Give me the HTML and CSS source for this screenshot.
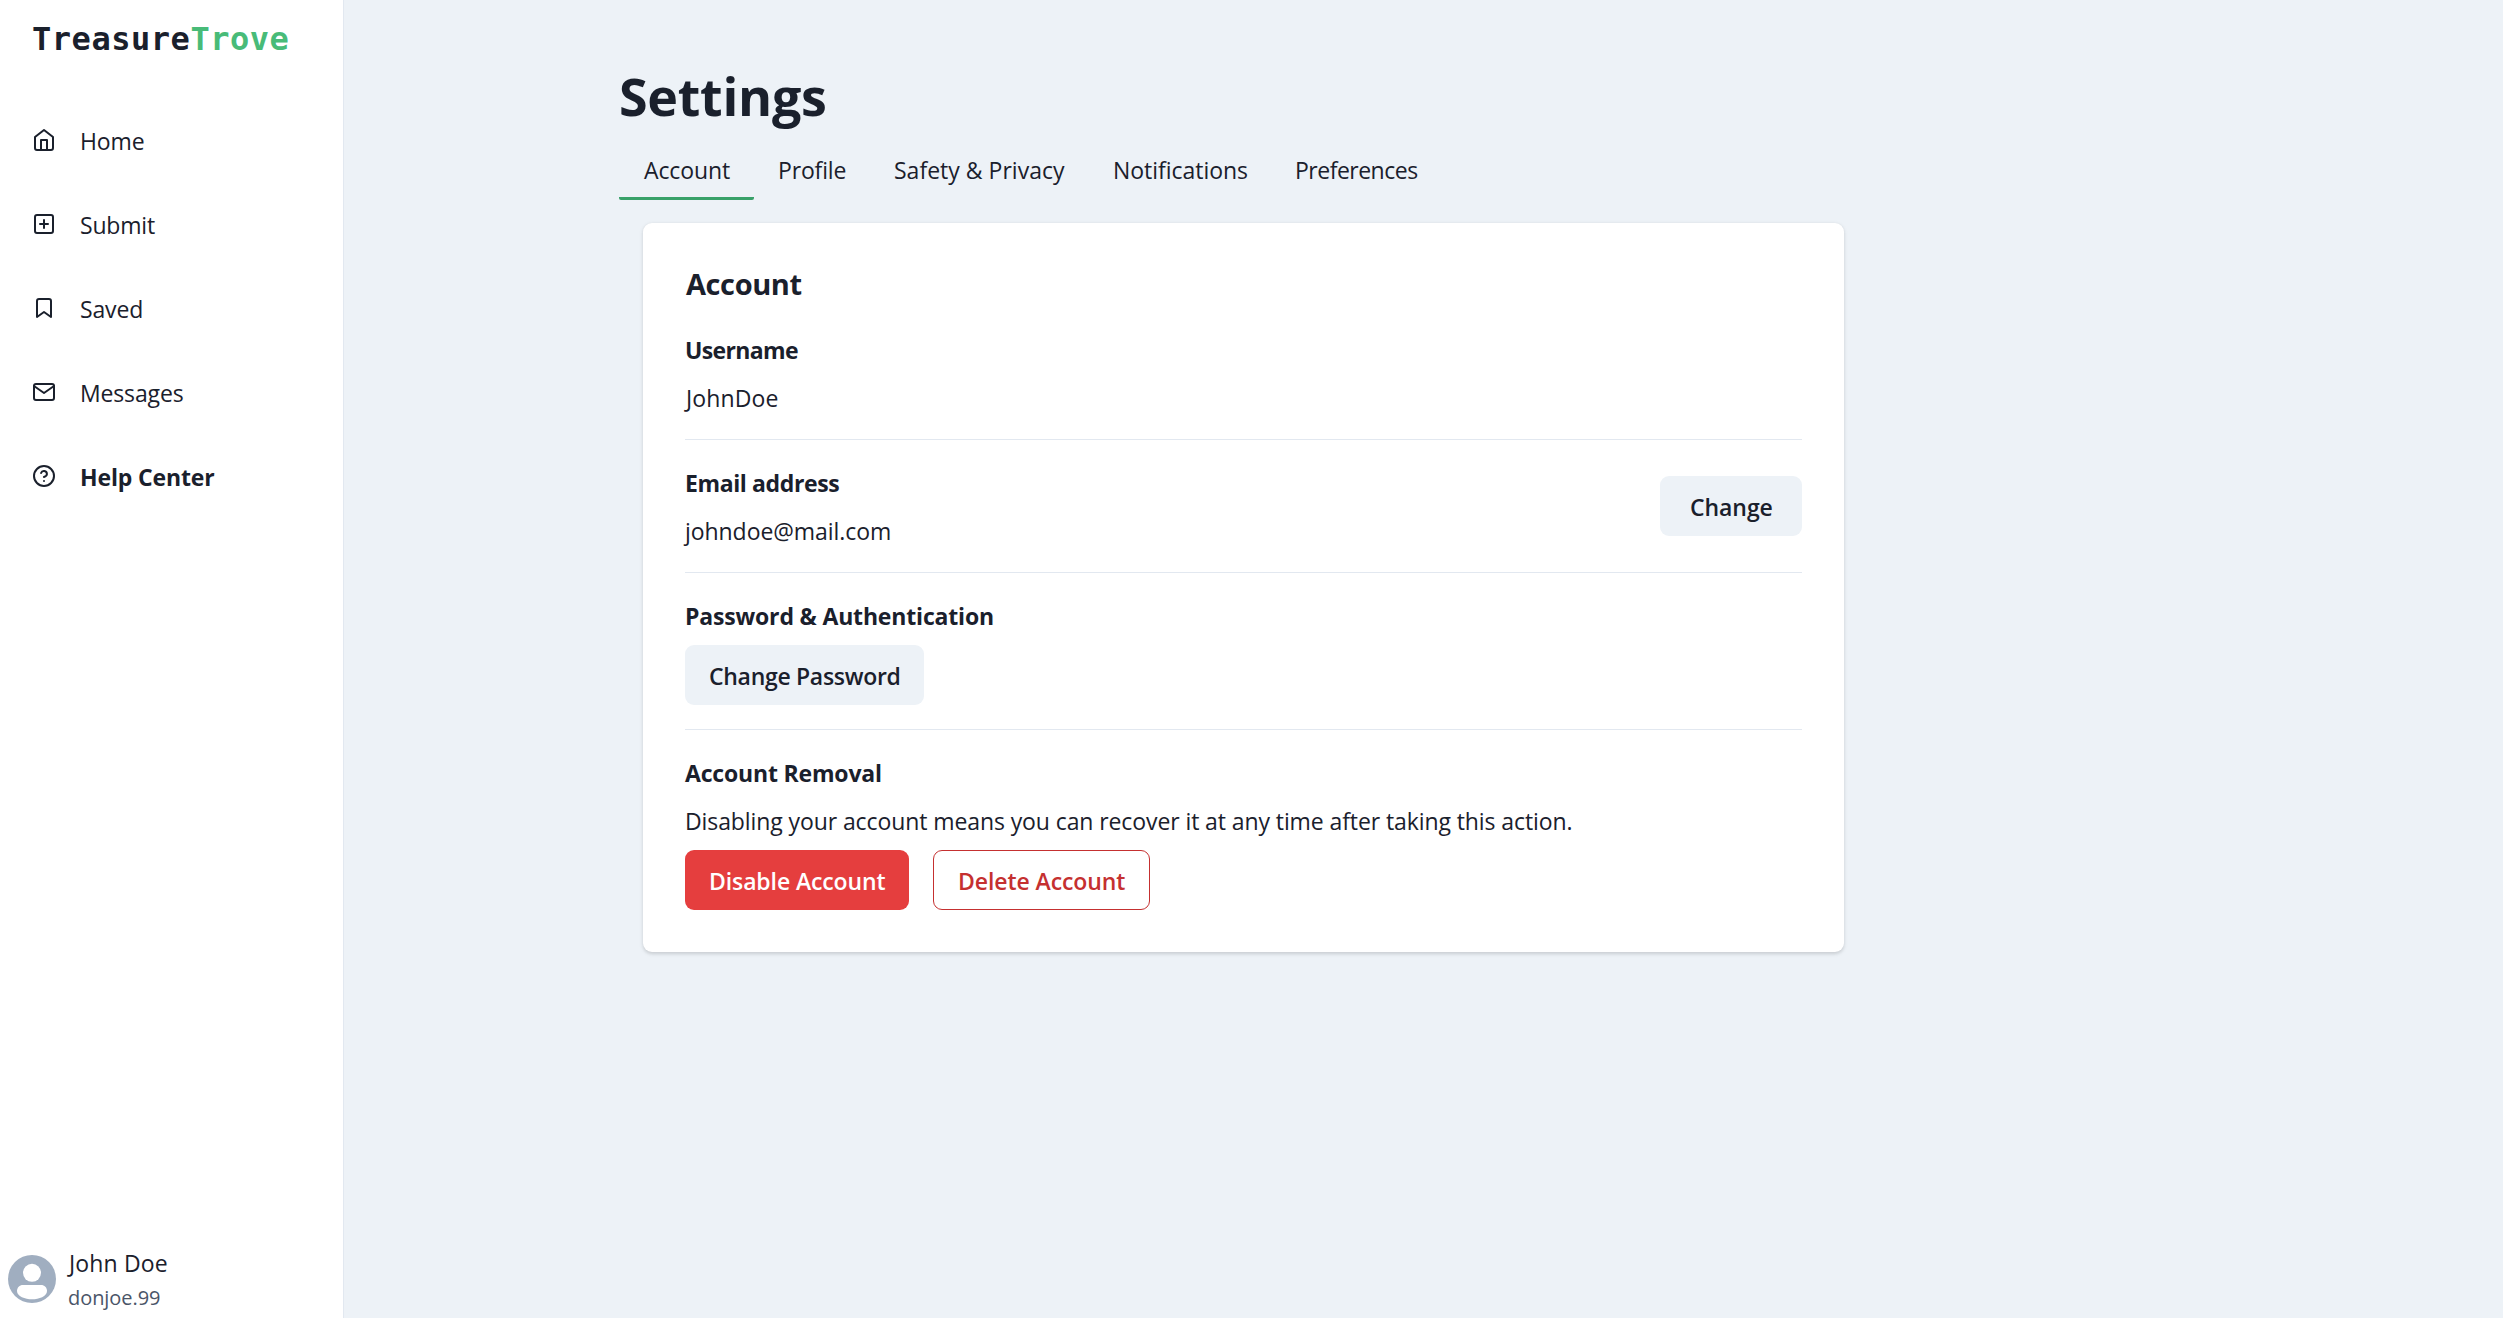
FILE: index.html
```
<!DOCTYPE html>
<html lang="en">
<head>
<meta charset="utf-8">
<title>Settings - TreasureTrove</title>
<link rel="stylesheet" href="styles.css">
</head>
<body>
<div class="app">
  <aside class="sidebar">
    <div class="logo">Treasure<span class="logo-accent">Trove</span></div>
    <nav class="nav">
      <a class="nav-item home"><svg class="icon" viewBox="0 0 24 24"><path d="M3 9l9-7 9 7v11a2 2 0 0 1-2 2H5a2 2 0 0 1-2-2z"/><path d="M9 22V12h6v10"/></svg><span>Home</span></a>
      <a class="nav-item submit"><svg class="icon" viewBox="0 0 24 24"><rect x="3" y="3" width="18" height="18" rx="2"/><path d="M12 8v8M8 12h8"/></svg><span>Submit</span></a>
      <a class="nav-item saved"><svg class="icon" viewBox="0 0 24 24"><path d="M19 21l-7-5-7 5V5a2 2 0 0 1 2-2h10a2 2 0 0 1 2 2z"/></svg><span>Saved</span></a>
      <a class="nav-item messages"><svg class="icon" viewBox="0 0 24 24"><path d="M4 4h16c1.100 0 2 .9 2 2v12c0 1.100-.9 2-2 2H4c-1.100 0-2-.9-2-2V6c0-1.100.9-2 2-2z"/><path d="M22 6l-10 7L2 6"/></svg><span>Messages</span></a>
      <a class="nav-item help"><svg class="icon" viewBox="0 0 24 24"><circle cx="12" cy="12" r="10"/><path d="M9.090 9a3 3 0 0 1 5.830 1c0 2-3 3-3 3"/><path d="M12 17h.01"/></svg><span>Help Center</span></a>
    </nav>
    <div class="profile">
      <svg class="avatar" viewBox="0 0 48 48"><circle cx="24" cy="24" r="24" fill="#a0aec0"/><circle cx="24" cy="17.800" r="9" fill="#fff"/><path fill="#fff" d="M15 30h18c3.500 0 6 2.600 6 6 0 5.300-8 8.300-15 8.300S9 41.300 9 36c0-3.400 2.500-6 6-6z"/></svg>
      <div>
        <div class="profile-name">John Doe</div>
        <div class="profile-handle">donjoe.99</div>
      </div>
    </div>
  </aside>
  <main class="main">
    <h1 class="title">Settings</h1>
    <div class="tabs">
      <a class="tab tab-account active">Account</a>
      <a class="tab tab-profile">Profile</a>
      <a class="tab tab-safety">Safety &amp; Privacy</a>
      <a class="tab tab-notifications">Notifications</a>
      <a class="tab tab-preferences">Preferences</a>
    </div>
    <section class="card">
      <h2 class="card-title">Account</h2>
      <div class="setting">
        <h3 class="label label-username">Username</h3>
        <p class="value value-username">JohnDoe</p>
      </div>
      <hr class="divider">
      <div class="setting setting-row">
        <div>
          <h3 class="label label-email">Email address</h3>
          <p class="value value-email">johndoe@mail.com</p>
        </div>
        <button class="btn btn-change">Change</button>
      </div>
      <hr class="divider">
      <div class="setting">
        <h3 class="label">Password &amp; Authentication</h3>
        <button class="btn btn-password">Change Password</button>
      </div>
      <hr class="divider divider-loose">
      <div class="setting">
        <h3 class="label label-removal">Account Removal</h3>
        <p class="value">Disabling your account means you can recover it at any time after taking this action.</p>
        <div class="actions">
          <button class="btn btn-danger">Disable Account</button>
          <button class="btn btn-outline">Delete Account</button>
        </div>
      </div>
    </section>
  </main>
</div>
</body>
</html>
```
FILE: styles.css
```
* { box-sizing: border-box; margin: 0; padding: 0; }
body {
  font: 400 23px/36px "Open Sans", "Noto Sans", sans-serif;
  color: #1a202c;
  background: #edf2f7;
}
.app { display: flex; height: 100vh; min-height: 1318px; white-space: nowrap; }

.sidebar {
  width: 344px;
  flex: none;
  display: flex;
  flex-direction: column;
  padding-top: 15px;
  background: #fff;
  border-right: 1px solid #e2e8f0;
}
.logo {
  padding-left: 32px;
  font: 700 32px/48px "DejaVu Sans Mono", monospace;
  letter-spacing: 0.53px;
}
.logo-accent { color: #48bb78; }
.nav { display: flex; flex-direction: column; gap: 48px; margin-top: 60px; padding-left: 32px; }
.nav-item { display: flex; gap: 24px; height: 36px; }
.icon {
  width: 24px;
  height: 24px;
  margin-top: 5px;
  fill: none;
  stroke: currentColor;
  stroke-width: 2;
  stroke-linecap: round;
  stroke-linejoin: round;
}
.home { letter-spacing: -0.1px; }
.submit { letter-spacing: -0.178px; }
.saved { letter-spacing: -0.15px; }
.messages { letter-spacing: -0.15px; }
.help span { font-weight: 700; letter-spacing: -0.15px; }
.profile { display: flex; gap: 12px; margin-top: auto; padding: 0 0 3px 8px; }
.avatar { width: 48px; height: 48px; margin-top: 10px; }
.profile-name { padding-left: 1px; letter-spacing: 0.14px; }
.profile-handle { font-size: 20px; line-height: 34px; letter-spacing: -0.067px; color: #4a5568; }

.main { padding: 60px 0 0 275px; }
.title { font-size: 52px; line-height: 72px; font-weight: 700; letter-spacing: -0.276px; }
.tabs { display: flex; margin-top: 8px; }
.tab { height: 60px; padding: 12px 0 9px 24px; border-bottom: 3px solid transparent; border-radius: 2px; }
.active { border-bottom-color: #38a169; }
.tab-account { width: 135px; padding-left: 25px; letter-spacing: -0.104px; }
.tab-profile { width: 116px; letter-spacing: -0.154px; }
.tab-safety { width: 219px; letter-spacing: 0.013px; }
.tab-notifications { width: 182px; letter-spacing: -0.03px; }
.tab-preferences { width: 169px; letter-spacing: -0.5px; }

.card {
  width: 1201px;
  margin: 23px 0 0 24px;
  padding: 42px;
  background: #fff;
  border-radius: 9px;
  box-shadow: 0 1.5px 4.5px rgba(0, 0, 0, 0.1), 0 1.5px 3px rgba(0, 0, 0, 0.06);
}
.card-title { margin-bottom: 29px; padding-left: 1px; font-size: 29px; line-height: 38px; letter-spacing: -0.4px; }
.setting-row { display: flex; justify-content: space-between; }
.label { font-size: 23px; font-weight: 700; letter-spacing: -0.17px; }
.label-username { letter-spacing: -0.635px; }
.label-email { letter-spacing: -0.38px; }
.label-removal { letter-spacing: -0.18px; }
.value { margin-top: 12px; letter-spacing: -0.094px; }
.value-username { padding-left: 1px; letter-spacing: 0.14px; }
.value-email { letter-spacing: -0.058px; }
.divider { height: 1px; margin: 23px 0 25px; border: 0; background: #e2e8f0; }
.divider-loose { margin-top: 24px; }
.btn {
  display: block;
  height: 60px;
  margin-top: 11px;
  padding: 2px 24px 0;
  font: inherit;
  font-weight: 600;
  text-align: left;
  white-space: nowrap;
  color: inherit;
  background: #edf2f7;
  border: 0;
  border-radius: 9px;
}
.btn-change { width: 142px; padding-left: 30px; letter-spacing: -0.06px; }
.btn-password { width: 239px; letter-spacing: -0.3px; }
.actions { display: flex; gap: 24px; }
.btn-danger { width: 224px; letter-spacing: -0.11px; color: #fff; background: #e53e3e; }
.btn-outline { width: 217px; padding-top: 1px; letter-spacing: -0.08px; color: #c53030; background: transparent; border: 1px solid #c53030; }
```
